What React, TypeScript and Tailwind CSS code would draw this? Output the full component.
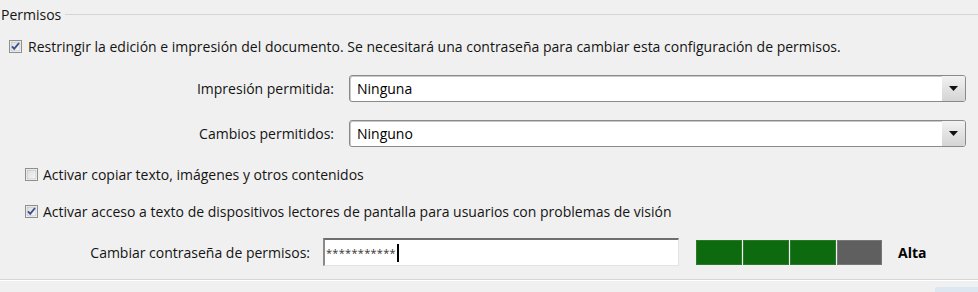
import React from 'react';

function Check({ checked }: { checked: boolean }) {
  return (
    <svg width="13" height="13" viewBox="0 0 13 13" className="shrink-0">
      <defs>
        <linearGradient id="cbg" x1="0" y1="0" x2="1" y2="1">
          <stop offset="0" stopColor="#dcdcdc" />
          <stop offset="1" stopColor="#f8f8f8" />
        </linearGradient>
      </defs>
      <rect x="0.5" y="0.5" width="12" height="12" fill="#fff" stroke="#8e8f8f" />
      <rect x="2" y="2" width="9" height="9" fill="url(#cbg)" stroke="#b0b0b0" strokeWidth="0.6" />
      {checked && (
        <path d="M3 6.4 L5.2 8.8 L10 3" fill="none" stroke="#3b4f8f" strokeWidth="1.9" />
      )}
    </svg>
  );
}

function Select({ value }: { value: string }) {
  return (
    <div className="flex h-[27px] w-[617px] items-stretch rounded-[3px] border border-[#8a8a8a] bg-white shadow-[inset_1px_1px_0_#c8c8c8]">
      <div className="flex flex-1 items-center pl-[7px] text-black">{value}</div>
      <div className="flex w-[23px] items-center justify-center rounded-r-[2px] bg-gradient-to-b from-[#f2f2f2] to-[#d4d4d4]">
        <svg width="9" height="5" viewBox="0 0 9 5">
          <path d="M0 0 H9 L4.5 5 Z" fill="#111" />
        </svg>
      </div>
    </div>
  );
}

export default function App() {
  return (
    <div
      className="h-[292px] w-[978px] overflow-hidden bg-[#f0f0f0] text-[14px] text-[#141414]"
      style={{ fontFamily: '"Open Sans", "Noto Sans", sans-serif' }}
    >
      {/* group header */}
      <div className="flex h-[28px] items-center">
        <span className="pl-[1px] pr-[4px]">Permisos</span>
        <div className="h-px flex-1 bg-[#d5d5d5]" />
      </div>

      <div className="flex h-[36px] items-center gap-[6px] pl-[9px]">
        <Check checked />
        <span>Restringir la edición e impresión del documento. Se necesitará una contraseña para cambiar esta configuración de permisos.</span>
      </div>

      <div className="mt-[11px] flex items-center">
        <div className="w-[334px] text-right">Impresión permitida:</div>
        <div className="ml-[15px]">
          <Select value="Ninguna" />
        </div>
      </div>

      <div className="mt-[18px] flex items-center">
        <div className="w-[334px] text-right">Cambios permitidos:</div>
        <div className="ml-[15px]">
          <Select value="Ninguno" />
        </div>
      </div>

      <div className="mt-[18px] flex h-[18px] items-center gap-[5px] pl-[25px]">
        <Check checked={false} />
        <span>Activar copiar texto, imágenes y otros contenidos</span>
      </div>

      <div className="mt-[19px] flex h-[18px] items-center gap-[5px] pl-[25px]">
        <Check checked />
        <span>Activar acceso a texto de dispositivos lectores de pantalla para usuarios con problemas de visión</span>
      </div>

      <div className="mt-[18px] flex h-[28px] items-center">
        <div className="w-[310px] text-right">Cambiar contraseña de permisos:</div>
        <div className="ml-[13px] flex h-[28px] w-[356px] items-center border-t-2 border-l-2 border-r border-b border-t-[#6e6e6e] border-l-[#8a8a8a] border-r-[#e3e3e3] border-b-[#e3e3e3] bg-white pl-[1px]">
          <span className="text-[11px] leading-none tracking-[0.3px] text-[#333]">***********</span>
          <span className="ml-[1px] h-[18px] w-[2px] bg-black" />
        </div>
        <div className="ml-[17px] flex h-[25px] gap-px">
          <div className="w-[46px] border border-[#2a7a2a] bg-[#0e6a0e]" />
          <div className="w-[46px] border border-[#2a7a2a] bg-[#0e6a0e]" />
          <div className="w-[46px] border border-[#2a7a2a] bg-[#0e6a0e]" />
          <div className="w-[45px] border border-[#777] bg-[#5f5f5f]" />
        </div>
        <span className="ml-[16px] font-bold text-black">Alta</span>
      </div>

      <div className="mt-[13px] h-px bg-[#d5d5d5]" />
      <div className="h-px bg-white" />
      <div className="flex justify-end pt-[6px]">
        <div className="h-[10px] w-[43px] rounded-tl-[2px] bg-[#dde7f2]" />
      </div>
    </div>
  );
}
